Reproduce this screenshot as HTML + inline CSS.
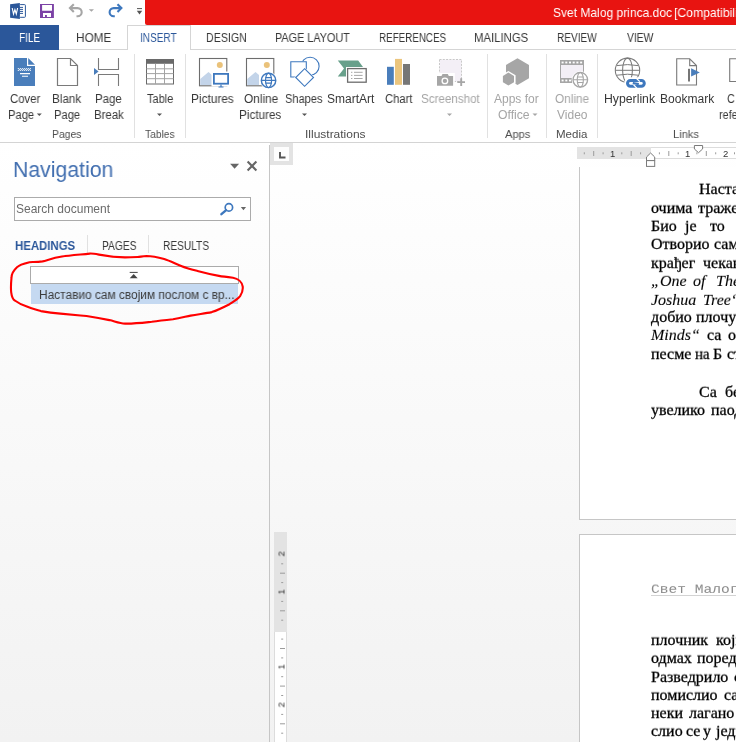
<!DOCTYPE html>
<html><head><meta charset="utf-8"><style>
html,body{margin:0;padding:0;}
body{width:736px;height:742px;position:relative;overflow:hidden;background:#fff;font-family:"Liberation Sans",sans-serif;}
.t{position:absolute;white-space:nowrap;will-change:transform;}
.r{position:absolute;box-sizing:border-box;}
svg{position:absolute;overflow:visible;}
</style></head><body>
<div class="r" style="left:0px;top:142px;width:736px;height:600px;background:linear-gradient(#ffffff,#f2f2f2);"></div>
<div class="r" style="left:145px;top:0px;width:591px;height:25px;background:#e81411;border-bottom-left-radius:2px;"></div>
<div class="r" style="left:0px;top:49px;width:736px;height:1px;background:#d5d5d5;"></div>
<div class="r" style="left:0px;top:25px;width:59px;height:25px;background:#2b579a;"></div>
<div class="r" style="left:127px;top:25px;width:64px;height:25px;border:1px solid #d5d5d5;border-bottom:none;background:#fff;"></div>
<div class="r" style="left:0px;top:142px;width:736px;height:1px;background:#d4d4d4;"></div>
<div class="r" style="left:134px;top:54px;width:1px;height:84px;background:#e1e1e1;"></div>
<div class="r" style="left:185px;top:54px;width:1px;height:84px;background:#e1e1e1;"></div>
<div class="r" style="left:487px;top:54px;width:1px;height:84px;background:#e1e1e1;"></div>
<div class="r" style="left:546px;top:54px;width:1px;height:84px;background:#e1e1e1;"></div>
<div class="r" style="left:597px;top:54px;width:1px;height:84px;background:#e1e1e1;"></div>
<div class="t" style="left:552.50px;top:5.64px;font-size:13.6px;line-height:13.6px;font-family:'Liberation Sans', sans-serif;color:#fff;transform:scale(0.885,1.0);transform-origin:0 11.56px;">Svet Malog princa.doc</div>
<div class="t" style="left:674.30px;top:5.64px;font-size:13.6px;line-height:13.6px;font-family:'Liberation Sans', sans-serif;color:#fff;transform:scale(0.897,1.0);transform-origin:0 11.56px;">[Compatibility Mode] - Word</div>
<div class="t" style="left:18.77px;top:31.60px;font-size:12px;line-height:12px;font-family:'Liberation Sans', sans-serif;color:#fff;transform:scale(0.8333333333333334,1.0);transform-origin:0 10.20px;">FILE</div>
<div class="t" style="left:75.62px;top:31.60px;font-size:12px;line-height:12px;font-family:'Liberation Sans', sans-serif;color:#383838;transform:scale(0.9799999999999999,1.0);transform-origin:0 10.20px;">HOME</div>
<div class="t" style="left:139.76px;top:31.60px;font-size:12px;line-height:12px;font-family:'Liberation Sans', sans-serif;color:#2b579a;transform:scale(0.8372093023255814,1.0);transform-origin:0 10.20px;">INSERT</div>
<div class="t" style="left:205.61px;top:31.60px;font-size:12px;line-height:12px;font-family:'Liberation Sans', sans-serif;color:#383838;transform:scale(0.8886363636363637,1.0);transform-origin:0 10.20px;">DESIGN</div>
<div class="t" style="left:274.60px;top:31.60px;font-size:12px;line-height:12px;font-family:'Liberation Sans', sans-serif;color:#383838;transform:scale(0.9024390243902439,1.0);transform-origin:0 10.20px;">PAGE LAYOUT</div>
<div class="t" style="left:378.68px;top:31.60px;font-size:12px;line-height:12px;font-family:'Liberation Sans', sans-serif;color:#383838;transform:scale(0.8185185185185185,1.0);transform-origin:0 10.20px;">REFERENCES</div>
<div class="t" style="left:474.45px;top:31.60px;font-size:12px;line-height:12px;font-family:'Liberation Sans', sans-serif;color:#383838;transform:scale(0.9464285714285714,1.0);transform-origin:0 10.20px;">MAILINGS</div>
<div class="t" style="left:557.46px;top:31.60px;font-size:12px;line-height:12px;font-family:'Liberation Sans', sans-serif;color:#383838;transform:scale(0.8382978723404255,1.0);transform-origin:0 10.20px;">REVIEW</div>
<div class="t" style="left:627.00px;top:31.60px;font-size:12px;line-height:12px;font-family:'Liberation Sans', sans-serif;color:#383838;transform:scale(0.8612903225806451,1.0);transform-origin:0 10.20px;">VIEW</div>
<div class="t" style="left:9.60px;top:92.80px;font-size:12px;line-height:12px;font-family:'Liberation Sans', sans-serif;color:#383838;transform:scale(0.946875,1.0);transform-origin:0 10.20px;">Cover</div>
<div class="t" style="left:7.77px;top:108.80px;font-size:12px;line-height:12px;font-family:'Liberation Sans', sans-serif;color:#383838;transform:scale(0.9333333333333332,1.0);transform-origin:0 10.20px;">Page</div>
<div class="t" style="left:51.73px;top:92.80px;font-size:12px;line-height:12px;font-family:'Liberation Sans', sans-serif;color:#383838;transform:scale(0.9724137931034482,1.0);transform-origin:0 10.20px;">Blank</div>
<div class="t" style="left:53.87px;top:108.80px;font-size:12px;line-height:12px;font-family:'Liberation Sans', sans-serif;color:#383838;transform:scale(0.9333333333333332,1.0);transform-origin:0 10.20px;">Page</div>
<div class="t" style="left:95.44px;top:92.80px;font-size:12px;line-height:12px;font-family:'Liberation Sans', sans-serif;color:#383838;transform:scale(0.9555555555555556,1.0);transform-origin:0 10.20px;">Page</div>
<div class="t" style="left:93.55px;top:108.80px;font-size:12px;line-height:12px;font-family:'Liberation Sans', sans-serif;color:#383838;transform:scale(0.9499999999999998,1.0);transform-origin:0 10.20px;">Break</div>
<div class="t" style="left:147.30px;top:92.80px;font-size:12px;line-height:12px;font-family:'Liberation Sans', sans-serif;color:#383838;transform:scale(0.917241379310345,1.0);transform-origin:0 10.20px;">Table</div>
<div class="t" style="left:191.41px;top:92.80px;font-size:12px;line-height:12px;font-family:'Liberation Sans', sans-serif;color:#383838;transform:scale(0.9857142857142857,1.0);transform-origin:0 10.20px;">Pictures</div>
<div class="t" style="left:243.50px;top:92.80px;font-size:12px;line-height:12px;font-family:'Liberation Sans', sans-serif;color:#383838;transform:scale(0.9857142857142858,1.0);transform-origin:0 10.20px;">Online</div>
<div class="t" style="left:238.62px;top:108.80px;font-size:12px;line-height:12px;font-family:'Liberation Sans', sans-serif;color:#383838;transform:scale(0.9761904761904762,1.0);transform-origin:0 10.20px;">Pictures</div>
<div class="t" style="left:285.08px;top:92.80px;font-size:12px;line-height:12px;font-family:'Liberation Sans', sans-serif;color:#383838;transform:scale(0.9199999999999999,1.0);transform-origin:0 10.20px;">Shapes</div>
<div class="t" style="left:327.21px;top:92.80px;font-size:12px;line-height:12px;font-family:'Liberation Sans', sans-serif;color:#383838;transform:scale(0.9936170212765957,1.0);transform-origin:0 10.20px;">SmartArt</div>
<div class="t" style="left:384.70px;top:92.80px;font-size:12px;line-height:12px;font-family:'Liberation Sans', sans-serif;color:#383838;transform:scale(0.9366666666666669,1.0);transform-origin:0 10.20px;">Chart</div>
<div class="t" style="left:420.93px;top:92.80px;font-size:12px;line-height:12px;font-family:'Liberation Sans', sans-serif;color:#a5a5a5;transform:scale(0.9683333333333334,1.0);transform-origin:0 10.20px;">Screenshot</div>
<div class="t" style="left:494.40px;top:92.80px;font-size:12px;line-height:12px;font-family:'Liberation Sans', sans-serif;color:#a5a5a5;transform:scale(0.9888888888888889,1.0);transform-origin:0 10.20px;">Apps for</div>
<div class="t" style="left:497.50px;top:108.80px;font-size:12px;line-height:12px;font-family:'Liberation Sans', sans-serif;color:#a5a5a5;transform:scale(1.0161290322580645,1.0);transform-origin:0 10.20px;">Office</div>
<div class="t" style="left:554.50px;top:92.80px;font-size:12px;line-height:12px;font-family:'Liberation Sans', sans-serif;color:#a5a5a5;transform:scale(0.9828571428571428,1.0);transform-origin:0 10.20px;">Online</div>
<div class="t" style="left:557.20px;top:108.80px;font-size:12px;line-height:12px;font-family:'Liberation Sans', sans-serif;color:#a5a5a5;transform:scale(0.9899999999999999,1.0);transform-origin:0 10.20px;">Video</div>
<div class="t" style="left:603.58px;top:92.80px;font-size:12px;line-height:12px;font-family:'Liberation Sans', sans-serif;color:#383838;transform:scale(1.0204081632653061,1.0);transform-origin:0 10.20px;">Hyperlink</div>
<div class="t" style="left:659.70px;top:92.80px;font-size:12px;line-height:12px;font-family:'Liberation Sans', sans-serif;color:#383838;transform:scale(1.0037735849056604,1.0);transform-origin:0 10.20px;">Bookmark</div>
<div class="t" style="left:726.50px;top:92.80px;font-size:12px;line-height:12px;font-family:'Liberation Sans', sans-serif;color:#383838;transform:scale(0.9,1.0);transform-origin:0 10.20px;">C</div>
<div class="t" style="left:718.80px;top:108.80px;font-size:12px;line-height:12px;font-family:'Liberation Sans', sans-serif;color:#383838;transform:scale(0.9,1.0);transform-origin:0 10.20px;">refe</div>
<div class="t" style="left:51.83px;top:129.22px;font-size:11.5px;line-height:11.5px;font-family:'Liberation Sans', sans-serif;color:#4e4e4e;transform:scale(0.9043478260869565,1.0);transform-origin:0 9.78px;">Pages</div>
<div class="t" style="left:144.60px;top:129.22px;font-size:11.5px;line-height:11.5px;font-family:'Liberation Sans', sans-serif;color:#4e4e4e;transform:scale(0.8914285714285713,1.0);transform-origin:0 9.78px;">Tables</div>
<div class="t" style="left:305.40px;top:129.22px;font-size:11.5px;line-height:11.5px;font-family:'Liberation Sans', sans-serif;color:#4e4e4e;transform:scale(1.0417391304347827,1.0);transform-origin:0 9.78px;">Illustrations</div>
<div class="t" style="left:504.50px;top:129.22px;font-size:11.5px;line-height:11.5px;font-family:'Liberation Sans', sans-serif;color:#4e4e4e;transform:scale(0.966183574879227,1.0);transform-origin:0 9.78px;">Apps</div>
<div class="t" style="left:555.64px;top:129.22px;font-size:11.5px;line-height:11.5px;font-family:'Liberation Sans', sans-serif;color:#4e4e4e;transform:scale(1.001086956521739,1.0);transform-origin:0 9.78px;">Media</div>
<div class="t" style="left:672.67px;top:129.22px;font-size:11.5px;line-height:11.5px;font-family:'Liberation Sans', sans-serif;color:#4e4e4e;transform:scale(0.9700483091787441,1.0);transform-origin:0 9.78px;">Links</div>
<div class="r" style="left:269px;top:145px;width:1px;height:597px;background:#c6c6c6;"></div>
<div class="t" style="left:13.20px;top:159.47px;font-size:21.8px;line-height:21.8px;font-family:'Liberation Sans', sans-serif;color:#426fb0;transform:scale(0.975,1.0);transform-origin:0 18.53px;">Navigation</div>
<div class="r" style="left:14px;top:197px;width:237px;height:24px;border:1px solid #ababab;background:#fff;"></div>
<div class="t" style="left:16.30px;top:202.60px;font-size:12px;line-height:12px;font-family:'Liberation Sans', sans-serif;color:#6a6a6a;">Search document</div>
<div class="t" style="left:14.80px;top:239.50px;font-size:12px;line-height:12px;font-family:'Liberation Sans', sans-serif;color:#2b579a;transform:scale(0.95,1.0);transform-origin:0 10.20px;"><b>HEADINGS</b></div>
<div class="r" style="left:87px;top:235px;width:1px;height:18px;background:#e1e1e1;"></div>
<div class="r" style="left:148px;top:235px;width:1px;height:18px;background:#e1e1e1;"></div>
<div class="t" style="left:101.85px;top:239.50px;font-size:12px;line-height:12px;font-family:'Liberation Sans', sans-serif;color:#383838;transform:scale(0.8538461538461538,1.0);transform-origin:0 10.20px;">PAGES</div>
<div class="t" style="left:163.35px;top:239.50px;font-size:12px;line-height:12px;font-family:'Liberation Sans', sans-serif;color:#383838;transform:scale(0.8452830188679245,1.0);transform-origin:0 10.20px;">RESULTS</div>
<div class="r" style="left:30px;top:266px;width:209px;height:18px;border:1px solid #ababab;background:#fff;"></div>
<div class="r" style="left:31px;top:284px;width:207px;height:20px;background:#c5d9f1;"></div>
<div class="t" style="left:38.60px;top:288.60px;font-size:12px;line-height:12px;font-family:'Liberation Sans', sans-serif;color:#3c3c3c;transform:scale(0.99,1.0);transform-origin:0 10.20px;">Наставио сам својим послом с вр...</div>
<div class="r" style="left:270px;top:143px;width:23px;height:22px;background:#e3e3e3;"></div>
<div class="r" style="left:274px;top:147px;width:15px;height:14px;background:#fdfdfd;"></div>
<div class="r" style="left:577px;top:147px;width:159px;height:12px;background:#fff;"></div>
<div class="r" style="left:577px;top:147px;width:74px;height:12px;background:#e3e3e3;"></div>
<div class="r" style="left:274px;top:532px;width:13px;height:210px;background:#fff;"></div>
<div class="r" style="left:274px;top:532px;width:13px;height:100px;background:#e3e3e3;"></div>
<div class="r" style="left:579px;top:167px;width:200px;height:353px;border-left:1px solid #c6c6c6;border-bottom:1px solid #c6c6c6;background:#fff;"></div>
<div class="r" style="left:579px;top:534px;width:200px;height:260px;border:1px solid #c6c6c6;border-right:none;background:#fff;"></div>
<div class="t" style="left:698.70px;top:181.12px;font-size:16px;line-height:16px;font-family:'Liberation Serif', serif;color:#000;transform:scale(1.0,0.93);transform-origin:0 13.28px;-webkit-text-stroke:0.3px #000;">Настављао</div>
<div class="t" style="left:650.90px;top:199.72px;font-size:16px;line-height:16px;font-family:'Liberation Serif', serif;color:#000;transform:scale(1.0,0.93);transform-origin:0 13.28px;-webkit-text-stroke:0.3px #000;">очима</div>
<div class="t" style="left:698.00px;top:199.72px;font-size:16px;line-height:16px;font-family:'Liberation Serif', serif;color:#000;transform:scale(1.0,0.93);transform-origin:0 13.28px;-webkit-text-stroke:0.3px #000;">тражећи</div>
<div class="t" style="left:650.90px;top:217.92px;font-size:16px;line-height:16px;font-family:'Liberation Serif', serif;color:#000;transform:scale(1.0,0.93);transform-origin:0 13.28px;-webkit-text-stroke:0.3px #000;">Био</div>
<div class="t" style="left:685.20px;top:217.92px;font-size:16px;line-height:16px;font-family:'Liberation Serif', serif;color:#000;transform:scale(1.0,0.93);transform-origin:0 13.28px;-webkit-text-stroke:0.3px #000;">је</div>
<div class="t" style="left:709.50px;top:217.92px;font-size:16px;line-height:16px;font-family:'Liberation Serif', serif;color:#000;transform:scale(1.0,0.93);transform-origin:0 13.28px;-webkit-text-stroke:0.3px #000;">то</div>
<div class="t" style="left:650.90px;top:236.42px;font-size:16px;line-height:16px;font-family:'Liberation Serif', serif;color:#000;transform:scale(1.0,0.93);transform-origin:0 13.28px;-webkit-text-stroke:0.3px #000;">Отворио</div>
<div class="t" style="left:713.60px;top:236.42px;font-size:16px;line-height:16px;font-family:'Liberation Serif', serif;color:#000;transform:scale(1.0,0.93);transform-origin:0 13.28px;-webkit-text-stroke:0.3px #000;">сам</div>
<div class="t" style="left:650.90px;top:255.22px;font-size:16px;line-height:16px;font-family:'Liberation Serif', serif;color:#000;transform:scale(1.0,0.93);transform-origin:0 13.28px;-webkit-text-stroke:0.3px #000;">крађег</div>
<div class="t" style="left:703.40px;top:255.22px;font-size:16px;line-height:16px;font-family:'Liberation Serif', serif;color:#000;transform:scale(1.0,0.93);transform-origin:0 13.28px;-webkit-text-stroke:0.3px #000;">чекање</div>
<div class="t" style="left:650.90px;top:273.12px;font-size:16px;line-height:16px;font-family:'Liberation Serif', serif;color:#000;transform:scale(1.0,0.93);transform-origin:0 13.28px;font-style:italic;-webkit-text-stroke:0.1px #000;">„One</div>
<div class="t" style="left:693.30px;top:273.12px;font-size:16px;line-height:16px;font-family:'Liberation Serif', serif;color:#000;transform:scale(1.0,0.93);transform-origin:0 13.28px;font-style:italic;-webkit-text-stroke:0.1px #000;">of</div>
<div class="t" style="left:715.60px;top:273.12px;font-size:16px;line-height:16px;font-family:'Liberation Serif', serif;color:#000;transform:scale(1.0,0.93);transform-origin:0 13.28px;font-style:italic;-webkit-text-stroke:0.1px #000;">The</div>
<div class="t" style="left:650.90px;top:291.72px;font-size:16px;line-height:16px;font-family:'Liberation Serif', serif;color:#000;transform:scale(1.0,0.93);transform-origin:0 13.28px;font-style:italic;-webkit-text-stroke:0.1px #000;">Joshua</div>
<div class="t" style="left:702.80px;top:291.72px;font-size:16px;line-height:16px;font-family:'Liberation Serif', serif;color:#000;transform:scale(1.0,0.93);transform-origin:0 13.28px;font-style:italic;-webkit-text-stroke:0.1px #000;">Tree“</div>
<div class="t" style="left:650.90px;top:309.22px;font-size:16px;line-height:16px;font-family:'Liberation Serif', serif;color:#000;transform:scale(1.0,0.93);transform-origin:0 13.28px;-webkit-text-stroke:0.3px #000;">добио</div>
<div class="t" style="left:696.00px;top:309.22px;font-size:16px;line-height:16px;font-family:'Liberation Serif', serif;color:#000;transform:scale(1.0,0.93);transform-origin:0 13.28px;-webkit-text-stroke:0.3px #000;">плочу</div>
<div class="t" style="left:650.90px;top:327.42px;font-size:16px;line-height:16px;font-family:'Liberation Serif', serif;color:#000;transform:scale(1.0,0.93);transform-origin:0 13.28px;font-style:italic;-webkit-text-stroke:0.1px #000;">Minds“</div>
<div class="t" style="left:706.80px;top:327.42px;font-size:16px;line-height:16px;font-family:'Liberation Serif', serif;color:#000;transform:scale(1.0,0.93);transform-origin:0 13.28px;-webkit-text-stroke:0.3px #000;">са</div>
<div class="t" style="left:727.70px;top:327.42px;font-size:16px;line-height:16px;font-family:'Liberation Serif', serif;color:#000;transform:scale(1.0,0.93);transform-origin:0 13.28px;-webkit-text-stroke:0.3px #000;">оно</div>
<div class="t" style="left:650.90px;top:345.92px;font-size:16px;line-height:16px;font-family:'Liberation Serif', serif;color:#000;transform:scale(1.0,0.93);transform-origin:0 13.28px;-webkit-text-stroke:0.3px #000;">песме</div>
<div class="t" style="left:695.40px;top:345.92px;font-size:16px;line-height:16px;font-family:'Liberation Serif', serif;color:#000;transform:scale(0.93,0.93);transform-origin:0 13.28px;-webkit-text-stroke:0.3px #000;">на</div>
<div class="t" style="left:712.90px;top:345.92px;font-size:16px;line-height:16px;font-family:'Liberation Serif', serif;color:#000;transform:scale(1.0,0.93);transform-origin:0 13.28px;-webkit-text-stroke:0.3px #000;">Б</div>
<div class="t" style="left:727.00px;top:345.92px;font-size:16px;line-height:16px;font-family:'Liberation Serif', serif;color:#000;transform:scale(1.0,0.93);transform-origin:0 13.28px;-webkit-text-stroke:0.3px #000;">страни</div>
<div class="t" style="left:699.10px;top:384.02px;font-size:16px;line-height:16px;font-family:'Liberation Serif', serif;color:#000;transform:scale(1.0,0.93);transform-origin:0 13.28px;-webkit-text-stroke:0.3px #000;">Са</div>
<div class="t" style="left:724.80px;top:384.02px;font-size:16px;line-height:16px;font-family:'Liberation Serif', serif;color:#000;transform:scale(1.0,0.93);transform-origin:0 13.28px;-webkit-text-stroke:0.3px #000;">бескрајним</div>
<div class="t" style="left:650.90px;top:401.72px;font-size:16px;line-height:16px;font-family:'Liberation Serif', serif;color:#000;transform:scale(1.0,0.93);transform-origin:0 13.28px;-webkit-text-stroke:0.3px #000;">увелико</div>
<div class="t" style="left:710.50px;top:401.72px;font-size:16px;line-height:16px;font-family:'Liberation Serif', serif;color:#000;transform:scale(1.0,0.93);transform-origin:0 13.28px;-webkit-text-stroke:0.3px #000;">паод</div>
<div class="t" style="left:651.00px;top:582.10px;font-size:14.6px;line-height:14.6px;font-family:'Liberation Mono', monospace;color:#8a8a8a;transform:scale(1.0,0.85);transform-origin:0 11.10px;text-decoration:underline;text-underline-offset:3.2px;text-decoration-thickness:1px;">Свет Малог принца</div>
<div class="t" style="left:650.90px;top:632.02px;font-size:16px;line-height:16px;font-family:'Liberation Serif', serif;color:#000;transform:scale(1.0,0.93);transform-origin:0 13.28px;-webkit-text-stroke:0.3px #000;">плочник</div>
<div class="t" style="left:715.60px;top:632.02px;font-size:16px;line-height:16px;font-family:'Liberation Serif', serif;color:#000;transform:scale(1.0,0.93);transform-origin:0 13.28px;-webkit-text-stroke:0.3px #000;">који</div>
<div class="t" style="left:650.90px;top:650.12px;font-size:16px;line-height:16px;font-family:'Liberation Serif', serif;color:#000;transform:scale(1.0,0.93);transform-origin:0 13.28px;-webkit-text-stroke:0.3px #000;">одмах</div>
<div class="t" style="left:696.70px;top:650.12px;font-size:16px;line-height:16px;font-family:'Liberation Serif', serif;color:#000;transform:scale(1.0,0.93);transform-origin:0 13.28px;-webkit-text-stroke:0.3px #000;">поред</div>
<div class="t" style="left:650.90px;top:669.02px;font-size:16px;line-height:16px;font-family:'Liberation Serif', serif;color:#000;transform:scale(1.0,0.93);transform-origin:0 13.28px;-webkit-text-stroke:0.3px #000;">Разведрило</div>
<div class="t" style="left:734.40px;top:669.02px;font-size:16px;line-height:16px;font-family:'Liberation Serif', serif;color:#000;transform:scale(1.0,0.93);transform-origin:0 13.28px;-webkit-text-stroke:0.3px #000;">се</div>
<div class="t" style="left:650.90px;top:686.52px;font-size:16px;line-height:16px;font-family:'Liberation Serif', serif;color:#000;transform:scale(1.0,0.93);transform-origin:0 13.28px;-webkit-text-stroke:0.3px #000;">помислио</div>
<div class="t" style="left:723.70px;top:686.52px;font-size:16px;line-height:16px;font-family:'Liberation Serif', serif;color:#000;transform:scale(1.0,0.93);transform-origin:0 13.28px;-webkit-text-stroke:0.3px #000;">сам</div>
<div class="t" style="left:650.90px;top:705.42px;font-size:16px;line-height:16px;font-family:'Liberation Serif', serif;color:#000;transform:scale(1.0,0.93);transform-origin:0 13.28px;-webkit-text-stroke:0.3px #000;">неки</div>
<div class="t" style="left:688.60px;top:705.42px;font-size:16px;line-height:16px;font-family:'Liberation Serif', serif;color:#000;transform:scale(1.0,0.93);transform-origin:0 13.28px;-webkit-text-stroke:0.3px #000;">лагано</div>
<div class="t" style="left:650.90px;top:722.92px;font-size:16px;line-height:16px;font-family:'Liberation Serif', serif;color:#000;transform:scale(1.0,0.93);transform-origin:0 13.28px;-webkit-text-stroke:0.3px #000;">слио</div>
<div class="t" style="left:685.90px;top:722.92px;font-size:16px;line-height:16px;font-family:'Liberation Serif', serif;color:#000;transform:scale(1.0,0.93);transform-origin:0 13.28px;-webkit-text-stroke:0.3px #000;">се</div>
<div class="t" style="left:703.40px;top:722.92px;font-size:16px;line-height:16px;font-family:'Liberation Serif', serif;color:#000;transform:scale(1.0,0.93);transform-origin:0 13.28px;-webkit-text-stroke:0.3px #000;">у</div>
<div class="t" style="left:715.60px;top:722.92px;font-size:16px;line-height:16px;font-family:'Liberation Serif', serif;color:#000;transform:scale(1.0,0.93);transform-origin:0 13.28px;-webkit-text-stroke:0.3px #000;">једну</div>
<svg width="736" height="742" style="left:0;top:0"><path d="M10.1 4.2 L19.9 3.1 V18.9 L10.1 17.8 Z" fill="#2b579a"/><rect x="19.4" y="4.6" width="6" height="12.7" rx="0.8" fill="#fff" stroke="#2b579a" stroke-width="1"/><path d="M19.5 7.4H23M19.5 9.4H23M19.5 11.4H23M19.5 13.4H23" stroke="#2b579a" stroke-width="1"/><path d="M12.2 8 L13.5 14 L14.9 9.6 L16.3 14 L17.6 8" fill="none" stroke="#fff" stroke-width="1.15" stroke-linejoin="miter" stroke-miterlimit="10"/><path d="M40 4 H53.9 V17.9 H40 Z M42.1 5 V10.8 H52 V5 Z M43 12.9 V17 H51 V12.9 Z" fill="#7c42a6" fill-rule="evenodd"/><rect x="45" y="15" width="1.9" height="2.2" fill="#7c42a6"/><path d="M70.5 8.1 H77.6 A4.1 4.1 0 0 1 77.6 16.3 H76.5" fill="none" stroke="#a6a6a6" stroke-width="2.1"/><path d="M73.8 4.2 L69.9 8.1 L73.8 12" fill="none" stroke="#a6a6a6" stroke-width="2.1"/><path d="M88.8 9.2 H94 L91.4 11.8 Z" fill="#a6a6a6"/><path d="M120.8 8.1 H113.7 A4.1 4.1 0 0 0 113.7 16.3 H114.8" fill="none" stroke="#3e78be" stroke-width="2.1"/><path d="M117.5 4.2 L121.4 8.1 L117.5 12" fill="none" stroke="#3e78be" stroke-width="2.1"/><path d="M137 8.6 H142" stroke="#555" stroke-width="1"/><path d="M136.8 10.8 H142.2 L139.5 14.6 Z" fill="#555"/><path d="M14 58 H27 V66 H35 V86 H14 Z" fill="#4a7ebb"/><path d="M28.2 58 L35 64.8 H28.2 Z" fill="#4a7ebb"/><path d="M17.8 68.5 H31" stroke="#fff" stroke-width="1" stroke-dasharray="1 1"/><path d="M18.8 69.5 H31" stroke="#fff" stroke-width="1" stroke-dasharray="1 1"/><path d="M17.8 70.5 H31" stroke="#fff" stroke-width="1" stroke-dasharray="1 1"/><path d="M20 73.6 H30 M22 76.3 H28" stroke="#fff" stroke-width="1.1"/><path d="M57.5 58.5 H70.5 L77.5 65.5 V85.5 H57.5 Z M70.5 58.5 V65.5 H77.5" fill="#fff" stroke="#7a7a7a" stroke-width="1.2"/><path d="M98.5 58 V69.5 H118.5 V58 M98.5 86 V74.5 H118.5 V86" fill="none" stroke="#7a7a7a" stroke-width="1.1"/><path d="M94 68 L98.6 71.5 L94 75 Z" fill="#4a7ebb"/><rect x="146.5" y="59.5" width="27" height="24.5" fill="#fff" stroke="#6a6a6a" stroke-width="1"/><rect x="146" y="59" width="28" height="4.8" fill="#6a6a6a"/><path d="M155.5 63.8 V84 M164.5 63.8 V84 M146.5 68.8 H173.5 M146.5 73.6 H173.5 M146.5 78.7 H173.5" stroke="#a3a3a3" stroke-width="1"/><rect x="199.5" y="58.5" width="27.3" height="27.3" fill="#fff" stroke="#6d6d6d" stroke-width="1.1"/><circle cx="219.8" cy="65" r="3" fill="#eac27a"/><path d="M200.2 79 L208.5 72 L212 75 V85 H200.2 Z" fill="#c3d4e9"/><rect x="211.5" y="71.5" width="19" height="15" fill="#fff"/><rect x="213.9" y="73.9" width="14.2" height="9.8" fill="#fff" stroke="#3e78be" stroke-width="1.8"/><path d="M218.5 87 H223.5 M221 84.6 V86.6" stroke="#3e78be" stroke-width="1.2"/><rect x="246.5" y="58.5" width="27.3" height="27.3" fill="#fff" stroke="#6d6d6d" stroke-width="1.1"/><circle cx="266.8" cy="65" r="3" fill="#eac27a"/><path d="M247.2 79 L255.5 72 L259 75 V85 H247.2 Z" fill="#c3d4e9"/><circle cx="268.55" cy="80.4" r="8.6" fill="#fff"/><circle cx="268.55" cy="80.4" r="7.2" fill="#fff" stroke="#3e78be" stroke-width="1.44"/><ellipse cx="268.55" cy="80.4" rx="3.024" ry="7.2" fill="none" stroke="#3e78be" stroke-width="1.2"/><path d="M261.35 80.4 H275.75 M265.526 77.664 H271.574 M265.526 83.13600000000001 H271.574" stroke="#3e78be" stroke-width="1.2"/><circle cx="310.1" cy="66.2" r="9" fill="none" stroke="#3e78be" stroke-width="1.1"/><path d="M290.3 61.3 H306.8 V77.5 H290.3 Z" fill="#fff"/><path d="M290.8 61.8 H306.3 V77 H290.8 Z" fill="#fff" stroke="#3e78be" stroke-width="1.1"/><path d="M304.6 67.2 L315 77.5 L304.6 87.8 L294.2 77.5 Z" fill="#fff"/><path d="M304.6 68.7 L313.5 77.5 L304.6 86.3 L295.7 77.5 Z" fill="#fff" stroke="#3e78be" stroke-width="1.1"/><path d="M337.8 60.4 H358.2 L363 67 V76.6 H337.8 L344 68.5 Z" fill="#68a08b"/><rect x="346" y="67" width="22" height="16.5" fill="#fff"/><rect x="347.6" y="68.6" width="18.6" height="13.6" fill="#fff" stroke="#6d6d6d" stroke-width="1.3"/><path d="M351 72.3 H352.4 M354 72.3 H362.6 M351 75.4 H352.4 M354 75.4 H362.6 M351 78.5 H352.4 M354 78.5 H362.6" stroke="#9c9c9c" stroke-width="0.9"/><rect x="387" y="66.8" width="6.8" height="18" fill="#4a7ebb"/><rect x="395" y="58.9" width="7" height="25.9" fill="#ebc57d"/><rect x="403" y="64" width="7" height="20.8" fill="#777"/><rect x="439.5" y="59.5" width="22" height="22" fill="#f3eff6" stroke="#c9c9c9" stroke-width="1" stroke-dasharray="2 1.3"/><rect x="435.8" y="73" width="19" height="14" fill="#fff"/><path d="M437 76 H441.5 L442.5 74 H447.8 L448.8 76 H453.1 V85.8 H437 Z" fill="#a6a6a6"/><circle cx="444.9" cy="80.9" r="2.8" fill="none" stroke="#fff" stroke-width="1.3"/><path d="M457.3 82.1 H465 M461.2 78.2 V86" stroke="#a6a6a6" stroke-width="1.9"/><path d="M517.5 58.3 L529 64.9 V78.3 L517.5 85 L506 78.3 V64.9 Z" fill="#a6a6a6"/><path d="M508.4 71 L515.6 75.2 V83.4 L508.4 87.5 L501.3 83.4 V75.2 Z" fill="#fff"/><path d="M508.4 72.6 L514 75.9 V82.3 L508.4 85.5 L502.9 82.3 V75.9 Z" fill="#a6a6a6"/><rect x="560.5" y="60.5" width="23" height="22" fill="#f3eff6" stroke="#a6a6a6" stroke-width="1"/><rect x="560" y="60" width="24" height="5" fill="#a6a6a6"/><rect x="560" y="78" width="24" height="5" fill="#a6a6a6"/><rect x="561.6" y="61.6" width="2" height="1.8" fill="#fff"/><rect x="561.6" y="79.6" width="2" height="1.8" fill="#fff"/><rect x="565.3000000000001" y="61.6" width="2" height="1.8" fill="#fff"/><rect x="565.3000000000001" y="79.6" width="2" height="1.8" fill="#fff"/><rect x="569.0" y="61.6" width="2" height="1.8" fill="#fff"/><rect x="569.0" y="79.6" width="2" height="1.8" fill="#fff"/><rect x="572.7" y="61.6" width="2" height="1.8" fill="#fff"/><rect x="572.7" y="79.6" width="2" height="1.8" fill="#fff"/><rect x="576.4" y="61.6" width="2" height="1.8" fill="#fff"/><rect x="576.4" y="79.6" width="2" height="1.8" fill="#fff"/><rect x="580.1" y="61.6" width="2" height="1.8" fill="#fff"/><rect x="580.1" y="79.6" width="2" height="1.8" fill="#fff"/><circle cx="580.3" cy="79.8" r="8.7" fill="#fff"/><circle cx="580.3" cy="79.8" r="7.3" fill="#fff" stroke="#a6a6a6" stroke-width="1.32"/><ellipse cx="580.3" cy="79.8" rx="3.066" ry="7.3" fill="none" stroke="#a6a6a6" stroke-width="1.1"/><path d="M573.0 79.8 H587.5999999999999 M577.2339999999999 77.026 H583.366 M577.2339999999999 82.574 H583.366" stroke="#a6a6a6" stroke-width="1.1"/><circle cx="627.5" cy="70.3" r="12.2" fill="#fff" stroke="#7a7a7a" stroke-width="1.05"/><ellipse cx="627.5" cy="70.3" rx="4.9" ry="12.2" fill="none" stroke="#7a7a7a" stroke-width="1.05"/><path d="M615.3 70.3 H639.7 M617 65.6 Q627.5 63.6 638 65.6 M617 75.2 Q627.5 73.2 638 75.2" fill="none" stroke="#7a7a7a" stroke-width="1"/><rect x="624.2" y="77.2" width="23.5" height="12.3" rx="6" fill="#fff"/><rect x="627.5" y="80.4" width="16.8" height="5.8" rx="2.9" fill="none" stroke="#3e78be" stroke-width="3"/><path d="M636.3 78.2 L639.8 81.6 M633.6 84.8 L637 88.4" stroke="#fff" stroke-width="1.3"/><path d="M632.8 83 L638.8 84.2" stroke="#3e78be" stroke-width="2.2"/><path d="M676.7 58.8 H689.7 L696.5 65.6 V85 H676.7 Z M689.7 58.8 V65.6 H696.5" fill="#fff" stroke="#7a7a7a" stroke-width="1.1"/><rect x="688.2" y="68.8" width="1.6" height="12.7" fill="#555"/><path d="M691.1 68.3 L699.8 72.4 L691.1 76.6 Z" fill="#4a7ebb"/><path d="M729.7 58.8 H742 V81.5 H729.7 Z" fill="#fff" stroke="#7a7a7a" stroke-width="1.1"/><path d="M36.8 113.39999999999999 H41.8 L39.3 115.89999999999999 Z" fill="#555"/><path d="M157.0 113.39999999999999 H162.0 L159.5 115.89999999999999 Z" fill="#555"/><path d="M302.0 113.39999999999999 H307.0 L304.5 115.89999999999999 Z" fill="#555"/><path d="M447.0 113.39999999999999 H452.0 L449.5 115.89999999999999 Z" fill="#a6a6a6"/><path d="M532.5 113.39999999999999 H537.5 L535 115.89999999999999 Z" fill="#a6a6a6"/><path d="M230.1 163.8 H239.1 L234.6 168.8 Z" fill="#666"/><path d="M247.6 161.6 L256.4 170.4 M256.4 161.6 L247.6 170.4" stroke="#666" stroke-width="2.1"/><circle cx="228.9" cy="207.4" r="3.7" fill="none" stroke="#3e78be" stroke-width="1.7"/><path d="M226.2 210.2 L221.4 214.2" stroke="#3e78be" stroke-width="2.4" stroke-linecap="round"/><path d="M240.8 207.1 H246.1 L243.45 210.2 Z" fill="#666"/><path d="M129.7 272.4 H137.7" stroke="#444" stroke-width="1"/><path d="M129.7 278.2 H137.7 L133.7 274 Z" fill="#444"/><path d="M125 257.4 C 105 257, 95 253, 89.8 253.6 C 75 255, 68 255.5, 62 256.5 C 52 258, 47 260.5, 42.5 261.4 C 36 262.5, 32 261.8, 29.5 262.2 C 22 264, 19 265, 17.2 267.1 C 12 272, 11.5 276, 11.5 277.7 C 10.8 285, 10.8 289, 11.2 292.4 C 11.8 297, 13 299.5, 14.8 300.5 C 19 303.5, 22 305, 26.2 306.3 C 32 308.5, 36 310, 40.9 311.1 C 48 312.5, 54 313.2, 60.4 313.6 C 70 314.5, 78 315.2, 86.5 316 C 96 317.5, 103 318.8, 109.4 320.1 C 116 321.8, 120 323.5, 125 323.6 C 135 323.8, 145 322.5, 151.8 321.8 C 160 320.5, 167 319.8, 173 319.2 C 180 318, 186 316.5, 190.6 315.6 C 198 314.2, 205 313.5, 211.8 312.1 C 218 310, 224 307, 229.5 304.2 C 234 301.5, 238 299, 240.1 296.2 C 243 292, 243 289, 242.7 286.5 C 242 282, 238 278.5, 233 277.7 C 226 277, 222 276.5, 218.9 275.9 C 211 274.5, 205 273, 199.5 271.5 C 192 269.5, 186 268, 181.8 266.2 C 175 263.5, 170 261, 164.2 259.1 C 157 257, 152 256, 146.5 256 C 142 256.2, 140 257, 137.7 257 C 132 257.3, 128 257.4, 125 257.4 Z" fill="none" stroke="#ff0000" stroke-width="2.1"/><path d="M584.3 152.3 V154.3" stroke="#9c9c9c" stroke-width="1"/><path d="M593.7 151 V156" stroke="#9c9c9c" stroke-width="1"/><path d="M603.1 152.3 V154.3" stroke="#9c9c9c" stroke-width="1"/><path d="M621.8 152.3 V154.3" stroke="#9c9c9c" stroke-width="1"/><path d="M631.2 151 V156" stroke="#9c9c9c" stroke-width="1"/><path d="M640.6 152.3 V154.3" stroke="#9c9c9c" stroke-width="1"/><path d="M659.4 152.3 V154.3" stroke="#9c9c9c" stroke-width="1"/><path d="M668.8 151 V156" stroke="#9c9c9c" stroke-width="1"/><path d="M678.2 152.3 V154.3" stroke="#9c9c9c" stroke-width="1"/><path d="M696.9 152.3 V154.3" stroke="#9c9c9c" stroke-width="1"/><path d="M706.3 151 V156" stroke="#9c9c9c" stroke-width="1"/><path d="M715.7 152.3 V154.3" stroke="#9c9c9c" stroke-width="1"/><path d="M734.5 152.3 V154.3" stroke="#9c9c9c" stroke-width="1"/><path d="M651 147.5 H736 M651 158.5 H736" stroke="#dcdcdc" stroke-width="1"/><path d="M646.5 157 L650.6 153 L654.7 157 V160.6 H646.5 Z" fill="#fff" stroke="#7a7a7a" stroke-width="1"/><rect x="646.5" y="160.6" width="8.2" height="5.8" fill="#fff" stroke="#7a7a7a" stroke-width="1"/><path d="M694.4 145.5 H702.6 V149 L698.5 152.7 L694.4 149 Z" fill="#fff" stroke="#7a7a7a" stroke-width="1"/><path d="M281.2 563.8 H283.2" stroke="#9c9c9c" stroke-width="1"/><path d="M280 573.2 H285" stroke="#9c9c9c" stroke-width="1"/><path d="M281.2 582.6 H283.2" stroke="#9c9c9c" stroke-width="1"/><path d="M281.2 601.4 H283.2" stroke="#9c9c9c" stroke-width="1"/><path d="M280 610.8 H285" stroke="#9c9c9c" stroke-width="1"/><path d="M281.2 620.2 H283.2" stroke="#9c9c9c" stroke-width="1"/><path d="M281.2 639.1 H283.2" stroke="#9c9c9c" stroke-width="1"/><path d="M280 648.5 H285" stroke="#9c9c9c" stroke-width="1"/><path d="M281.2 657.9 H283.2" stroke="#9c9c9c" stroke-width="1"/><path d="M281.2 676.7 H283.2" stroke="#9c9c9c" stroke-width="1"/><path d="M280 686.1 H285" stroke="#9c9c9c" stroke-width="1"/><path d="M281.2 695.5 H283.2" stroke="#9c9c9c" stroke-width="1"/><path d="M281.2 714.4 H283.2" stroke="#9c9c9c" stroke-width="1"/><path d="M280 723.8 H285" stroke="#9c9c9c" stroke-width="1"/><path d="M281.2 733.2 H283.2" stroke="#9c9c9c" stroke-width="1"/><path d="M274.5 632 V742 M286.5 632 V742" stroke="#dcdcdc" stroke-width="1"/><path d="M280 152 V157.5 H285.5" fill="none" stroke="#555" stroke-width="1.9"/></svg>
<div class="t" style="left:609.70px;top:148.93px;font-size:9.5px;line-height:9.5px;font-family:'Liberation Sans', sans-serif;color:#333;">1</div>
<div class="t" style="left:684.80px;top:148.93px;font-size:9.5px;line-height:9.5px;font-family:'Liberation Sans', sans-serif;color:#333;">1</div>
<div class="t" style="left:722.60px;top:148.93px;font-size:9.5px;line-height:9.5px;font-family:'Liberation Sans', sans-serif;color:#333;">2</div>
<div class="t" style="left:279.00px;top:548.92px;font-size:9.5px;line-height:9.5px;font-family:'Liberation Sans', sans-serif;color:#333;transform:rotate(-90deg);transform-origin:2.5px 5px;">2</div>
<div class="t" style="left:279.00px;top:586.72px;font-size:9.5px;line-height:9.5px;font-family:'Liberation Sans', sans-serif;color:#333;transform:rotate(-90deg);transform-origin:2.5px 5px;">1</div>
<div class="t" style="left:279.00px;top:662.02px;font-size:9.5px;line-height:9.5px;font-family:'Liberation Sans', sans-serif;color:#333;transform:rotate(-90deg);transform-origin:2.5px 5px;">1</div>
<div class="t" style="left:279.00px;top:699.72px;font-size:9.5px;line-height:9.5px;font-family:'Liberation Sans', sans-serif;color:#333;transform:rotate(-90deg);transform-origin:2.5px 5px;">2</div>
</body></html>
